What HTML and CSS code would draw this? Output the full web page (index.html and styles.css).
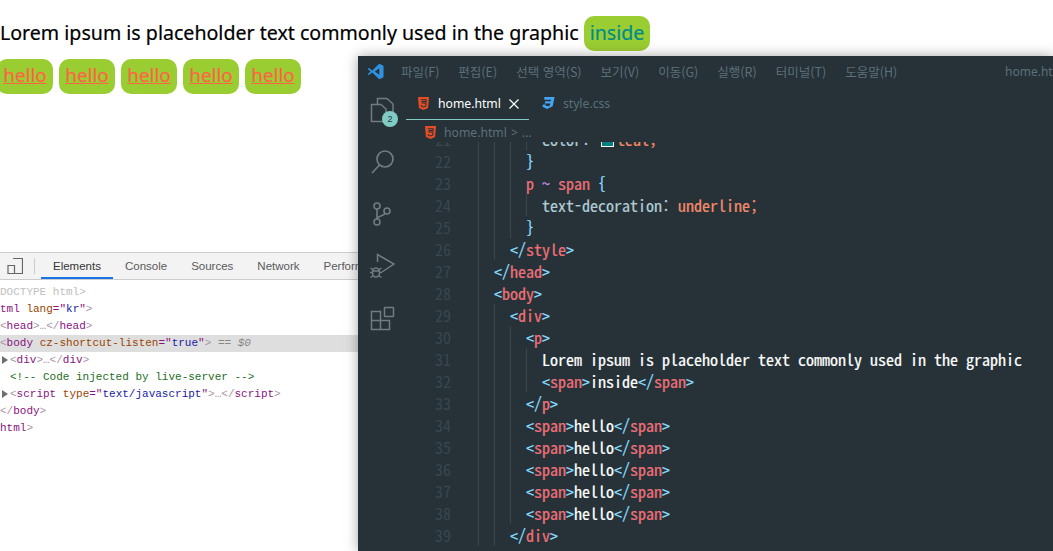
FILE: index.html
```html
<!DOCTYPE html>
<html lang="ko">
<head>
  <meta charset="UTF-8" />
  <title>home.html</title>
  <link rel="stylesheet" href="styles.css">
</head>
<body>
  <main class="page">
    <p class="lead">Lorem ipsum is placeholder text commonly used in the graphic <span class="pill inside">inside</span></p>
    <div class="hellos">
      <span class="pill hello">hello</span>
      <span class="pill hello">hello</span>
      <span class="pill hello">hello</span>
      <span class="pill hello">hello</span>
      <span class="pill hello">hello</span>
    </div>
  </main>

  <section class="devtools">
    <div class="dt-bar">
      <svg class="dt-device" width="16" height="16" viewBox="0 0 16 16"><path d="M6 .5h9.500v15H7.500M1 7.500h6.500v8H1z" fill="none" stroke="#666" stroke-width="1.200"/></svg>
      <span class="dt-sep"></span>
      <span class="dt-tab active">Elements</span>
      <span class="dt-tab">Console</span>
      <span class="dt-tab">Sources</span>
      <span class="dt-tab">Network</span>
      <span class="dt-tab">Performance</span>
    </div>
    <div class="dt-tree">
      <div class="dt-line doctype">DOCTYPE html&gt;</div>
      <div class="dt-line"><i class="tag">tml</i> <i class="attr">lang</i><i class="tag">="</i><i class="val">kr</i><i class="tag">"</i>&gt;</div>
      <div class="dt-line">&lt;<i class="tag">head</i>&gt;…&lt;/<i class="tag">head</i>&gt;</div>
      <div class="dt-line picked">&lt;<i class="tag">body</i> <i class="attr">cz-shortcut-listen</i><i class="tag">="</i><i class="val">true</i><i class="tag">"</i>&gt; <span class="eq">== <em>$0</em></span></div>
      <div class="dt-line in"><b class="tri"></b>&lt;<i class="tag">div</i>&gt;…&lt;/<i class="tag">div</i>&gt;</div>
      <div class="dt-line in comment">&lt;!-- Code injected by live-server --&gt;</div>
      <div class="dt-line in"><b class="tri"></b>&lt;<i class="tag">script</i> <i class="attr">type</i><i class="tag">="</i><i class="val">text/javascript</i><i class="tag">"</i>&gt;…&lt;/<i class="tag">script</i>&gt;</div>
      <div class="dt-line">&lt;/<i class="tag">body</i>&gt;</div>
      <div class="dt-line"><i class="tag">html</i>&gt;</div>
    </div>
  </section>

  <section class="vscode">
    <header class="titlebar">
      <svg class="logo" width="17" height="17" viewBox="0 0 18 18"><path d="M13 .8 17.500 3v12L13 17.200 5.500 10 2 12.800.5 12l3.300-3L.5 6 2 5.200 5.500 8zM13 5.500 8.300 9l4.700 3.500z" fill="#2f92e0" fill-rule="evenodd"/></svg>
      <nav class="menu">
        <span>파일(F)</span><span>편집(E)</span><span>선택 영역(S)</span><span>보기(V)</span><span>이동(G)</span><span>실행(R)</span><span>터미널(T)</span><span>도움말(H)</span>
      </nav>
      <span class="wintitle">home.html</span>
    </header>
    <div class="workbench">
      <aside class="activity">
        <div class="act files">
          <svg width="26" height="26" viewBox="0 0 26 26" fill="none" stroke="#707c82" stroke-width="1.500"><path d="M8.500 7V1.500H18l6 5.500v14h-5"/><path d="M2.500 7.500H12l5 4.500v12.500H2.500z"/></svg>
          <span class="badge">2</span>
        </div>
        <div class="act">
          <svg width="26" height="26" viewBox="0 0 26 26" fill="none" stroke="#707c82" stroke-width="1.700"><circle cx="16" cy="10" r="8"/><path d="M10.500 16 3 24"/></svg>
        </div>
        <div class="act">
          <svg width="26" height="26" viewBox="0 0 26 26" fill="none" stroke="#707c82" stroke-width="1.600"><circle cx="8" cy="5" r="3"/><circle cx="8" cy="21" r="3"/><circle cx="18" cy="10" r="3"/><path d="M8 8v10M16 12.500c-1.500 2.500-6 2-8 5"/></svg>
        </div>
        <div class="act">
          <svg width="26" height="26" viewBox="0 0 26 26" fill="none" stroke="#707c82" stroke-width="1.500"><path d="M8.500 9V1.500L25 11l-12 8"/><ellipse cx="7" cy="19.500" rx="3.500" ry="4.500"/><path d="M1.500 15l3 2M12.500 15l-3 2M1 19.500h2.500M10.500 19.500H13M1.500 24.500l3-2M12.500 24.500l-3-2M3.500 18h7"/></svg>
        </div>
        <div class="act">
          <svg width="26" height="26" viewBox="0 0 26 26" fill="none" stroke="#707c82" stroke-width="1.500"><path d="M2.500 6.500h9v9h9v9h-18zM2.500 15.500h9v9"/><rect x="15.500" y="2.500" width="9" height="9" rx=".6"/></svg>
        </div>
      </aside>
      <div class="main">
        <div class="tabs">
          <div class="tab current">
            <svg class="ficon" width="11" height="13" viewBox="0 0 12 14"><path d="M0 0h12l-1 12-5 2-5-2z" fill="#e44d26"/><path d="M3 3h6.200M9 3l-.100 1.700H4.500l.100 1.800H8.700L8.400 10 6 10.800 3.700 10l-.1-1.300" fill="none" stroke="#263238" stroke-width="1.100"/></svg>
            <span>home.html</span>
            <svg class="close" width="10" height="10" viewBox="0 0 10 10"><path d="M.5.500l9 9M9.500.500l-9 9" stroke="#fff" stroke-width="1.200"/></svg>
          </div>
          <div class="tab">
            <svg class="ficon" width="13" height="13" viewBox="0 0 13 14"><path d="M2 0h11l-2 10-6 3-5-2.500.500-2.500h3l-.3 1.200L6 10l2-.8.400-2.200H2.400l.5-2.500h6L9.300 3H2z" fill="#42a5f5"/></svg>
            <span>style.css</span>
          </div>
        </div>
        <div class="crumbs">
          <svg class="ficon" width="11" height="13" viewBox="0 0 12 14"><path d="M0 0h12l-1 12-5 2-5-2z" fill="#e44d26"/><path d="M3 3h6.200M9 3l-.100 1.700H4.500l.100 1.800H8.700L8.400 10 6 10.800 3.700 10l-.1-1.300" fill="none" stroke="#263238" stroke-width="1.100"/></svg>
          <span>home.html</span><span class="gt">&gt;</span><span>...</span>
        </div>
        <div class="editor">
          <div class="ln"><b>21</b><u></u><u></u><u></u><u></u><i class="pr">color:</i> <s class="swatch"></s><i class="va">teal;</i></div>
          <div class="ln"><b>22</b><u></u><u></u><u></u><i class="br">}</i></div>
          <div class="ln"><b>23</b><u></u><u></u><u></u><i class="na">p</i> <i class="ti">~</i> <i class="na">span</i> <i class="br">{</i></div>
          <div class="ln"><b>24</b><u></u><u></u><u></u><u></u><i class="pr">text-decoration:</i> <i class="va">underline;</i></div>
          <div class="ln"><b>25</b><u></u><u></u><u></u><i class="br">}</i></div>
          <div class="ln"><b>26</b><u></u><u></u><i class="br">&lt;/</i><i class="na">style</i><i class="br">&gt;</i></div>
          <div class="ln"><b>27</b><u></u><i class="br">&lt;/</i><i class="na">head</i><i class="br">&gt;</i></div>
          <div class="ln"><b>28</b><u></u><i class="br">&lt;</i><i class="na">body</i><i class="br">&gt;</i></div>
          <div class="ln"><b>29</b><u></u><u></u><i class="br">&lt;</i><i class="na">div</i><i class="br">&gt;</i></div>
          <div class="ln"><b>30</b><u></u><u></u><u></u><i class="br">&lt;</i><i class="na">p</i><i class="br">&gt;</i></div>
          <div class="ln"><b>31</b><u></u><u></u><u></u><u></u><i class="tx">Lorem ipsum is placeholder text commonly used in the graphic</i></div>
          <div class="ln"><b>32</b><u></u><u></u><u></u><u></u><i class="br">&lt;</i><i class="na">span</i><i class="br">&gt;</i><i class="tx">inside</i><i class="br">&lt;/</i><i class="na">span</i><i class="br">&gt;</i></div>
          <div class="ln"><b>33</b><u></u><u></u><u></u><i class="br">&lt;/</i><i class="na">p</i><i class="br">&gt;</i></div>
          <div class="ln"><b>34</b><u></u><u></u><u></u><i class="br">&lt;</i><i class="na">span</i><i class="br">&gt;</i><i class="tx">hello</i><i class="br">&lt;/</i><i class="na">span</i><i class="br">&gt;</i></div>
          <div class="ln"><b>35</b><u></u><u></u><u></u><i class="br">&lt;</i><i class="na">span</i><i class="br">&gt;</i><i class="tx">hello</i><i class="br">&lt;/</i><i class="na">span</i><i class="br">&gt;</i></div>
          <div class="ln"><b>36</b><u></u><u></u><u></u><i class="br">&lt;</i><i class="na">span</i><i class="br">&gt;</i><i class="tx">hello</i><i class="br">&lt;/</i><i class="na">span</i><i class="br">&gt;</i></div>
          <div class="ln"><b>37</b><u></u><u></u><u></u><i class="br">&lt;</i><i class="na">span</i><i class="br">&gt;</i><i class="tx">hello</i><i class="br">&lt;/</i><i class="na">span</i><i class="br">&gt;</i></div>
          <div class="ln"><b>38</b><u></u><u></u><u></u><i class="br">&lt;</i><i class="na">span</i><i class="br">&gt;</i><i class="tx">hello</i><i class="br">&lt;/</i><i class="na">span</i><i class="br">&gt;</i></div>
          <div class="ln"><b>39</b><u></u><u></u><i class="br">&lt;/</i><i class="na">div</i><i class="br">&gt;</i></div>
        </div>
      </div>
    </div>
  </section>
</body>
</html>
```
FILE: styles.css
```css
html, body {
  margin: 0;
  height: 551px;
  overflow: hidden;
  background: #fff;
}
i, em, u, s, b {
  font-style: normal;
  font-weight: normal;
  text-decoration: none;
}

/* page under the windows */
.page {
  margin-left: -3px;
  padding-top: 16px;
  font-family: "Noto Sans", sans-serif;
  font-size: 19.6px;
  -webkit-text-stroke: .2px;
  color: #000;
}
.lead {
  margin: 0 0 8px;
  padding-left: 3px;
  height: 35px;
  line-height: 33px;
  white-space: nowrap;
}
.pill {
  display: inline-block;
  height: 35px;
  line-height: 33px;
  padding: 0 6px;
  border-radius: 10px;
  background: #9acd32;
}
.inside {
  color: #008b8b;
}
.hellos {
  display: flex;
  gap: 6px;
}
.hello {
  width: 44px;
  color: #ff6347;
  font-size: 18.8px;
  text-align: center;
  text-decoration: underline;
}

/* devtools panel */
.devtools {
  position: absolute;
  left: 0;
  top: 252px;
  width: 358px;
  font-family: "Liberation Sans", sans-serif;
  overflow: hidden;
}
.dt-bar {
  display: flex;
  align-items: center;
  height: 26px;
  background: #f3f3f3;
  border-top: 1px solid #ccc;
  border-bottom: 1px solid #ccc;
  font-size: 11.5px;
  color: #5a5a5a;
  white-space: nowrap;
}
.dt-device {
  flex: none;
  margin-left: 7px;
}
.dt-sep {
  flex: none;
  width: 1px;
  height: 16px;
  background: #ccc;
  margin: 0 6px 0 11px;
}
.dt-tab {
  flex: none;
  align-self: stretch;
  line-height: 27px;
  padding: 0 12px;
}
.dt-tab.active {
  color: #333;
  box-shadow: inset 0 -2px #1a73e8;
}
.dt-tree {
  padding-top: 4px;
  font-family: "Liberation Mono", monospace;
  font-size: 11px;
  color: #a894a6;
}
.dt-line {
  height: 17px;
  line-height: 17px;
  white-space: pre;
}
.dt-line.in {
  padding-left: 10px;
  position: relative;
}
.dt-line.picked {
  background: #dedede;
}
.dt-line.doctype {
  color: #c0c0c0;
}
.tag {
  color: #881280;
}
.attr {
  color: #994500;
}
.val {
  color: #1a1aa6;
}
.eq {
  color: #888;
}
.eq em {
  font-style: italic;
}
.dt-line.comment {
  color: #236e25;
}
.tri {
  position: absolute;
  left: 2px;
  top: 4px;
  border-left: 6px solid #6e6e6e;
  border-top: 4px solid transparent;
  border-bottom: 4px solid transparent;
}

/* vscode window */
.vscode {
  position: absolute;
  left: 358px;
  top: 56px;
  width: 695px;
  height: 495px;
  background: #263238;
  box-shadow: 0 0 12px rgba(0, 0, 0, .35);
  overflow: hidden;
}
.titlebar {
  display: flex;
  align-items: center;
  height: 30px;
  padding-left: 9px;
  font-family: "Noto Sans CJK KR", sans-serif;
  font-size: 12.5px;
  color: #5d6f78;
  white-space: nowrap;
}
.menu {
  display: flex;
  gap: 19px;
  margin-left: 17px;
}
.wintitle {
  position: absolute;
  left: 647px;
  font-family: "Noto Sans", sans-serif;
  font-size: 12px;
}
.workbench {
  display: flex;
}
.activity {
  width: 48px;
  padding-top: 11px;
  display: flex;
  flex-direction: column;
  align-items: center;
}
.act {
  height: 52px;
  position: relative;
}
.act svg {
  display: block;
}
.badge {
  position: absolute;
  left: 13px;
  top: 14px;
  width: 16px;
  height: 16px;
  border-radius: 50%;
  background: #80cbc4;
  color: #263238;
  font: 9px/16px "Liberation Sans", sans-serif;
  text-align: center;
}
.main {
  flex: 1;
  min-width: 0;
}
.tabs {
  display: flex;
  height: 34px;
  padding-top: 1px;
  box-sizing: border-box;
  font-family: "Noto Sans", sans-serif;
  font-size: 12.2px;
  color: #5d6f78;
}
.tab {
  display: flex;
  align-items: center;
  gap: 8px;
  padding: 0 12px 0 13px;
}
.tab.current {
  color: #fff;
  padding: 0 10px 0 12px;
  box-shadow: inset 0 -1px #80cbc4;
}
.tab.current .ficon {
  margin-right: 1px;
}
.crumbs {
  display: flex;
  align-items: center;
  gap: 4px;
  height: 22px;
  padding: 2px 0 0 19px;
  box-sizing: border-box;
  font-family: "Noto Sans", sans-serif;
  font-size: 12.2px;
  color: #5d6f78;
}
.crumbs .ficon {
  margin-right: 4px;
}
.editor {
  height: 409px;
  overflow: hidden;
  font-family: "Noto Sans Mono CJK KR", "Liberation Mono", monospace;
  font-size: 16px;
  -webkit-text-stroke: .2px;
  color: #eeffff;
}
.ln {
  height: 22px;
  line-height: 22px;
  white-space: pre;
}
.ln:first-child {
  margin-top: -14px;
}
.ln b, .ln u {
  display: inline-block;
  vertical-align: top;
}
.ln b {
  width: 45px;
  padding-right: 27px;
  text-align: right;
  color: #37474f;
  -webkit-text-stroke: 0;
}
.ln u {
  width: 15px;
  height: 22px;
  border-left: 1px solid #37474f;
}
.br { color: #89ddff; }
.na { color: #f07178; }
.pr { color: #b2ccd6; }
.va { color: #f78c6c; }
.ti { color: #c792ea; }
.tx { color: #fff; }
.swatch {
  display: inline-block;
  vertical-align: middle;
  width: 11px;
  height: 9px;
  margin: 0 3px;
  border: 1px solid #fff;
  background: #008080;
}
```
